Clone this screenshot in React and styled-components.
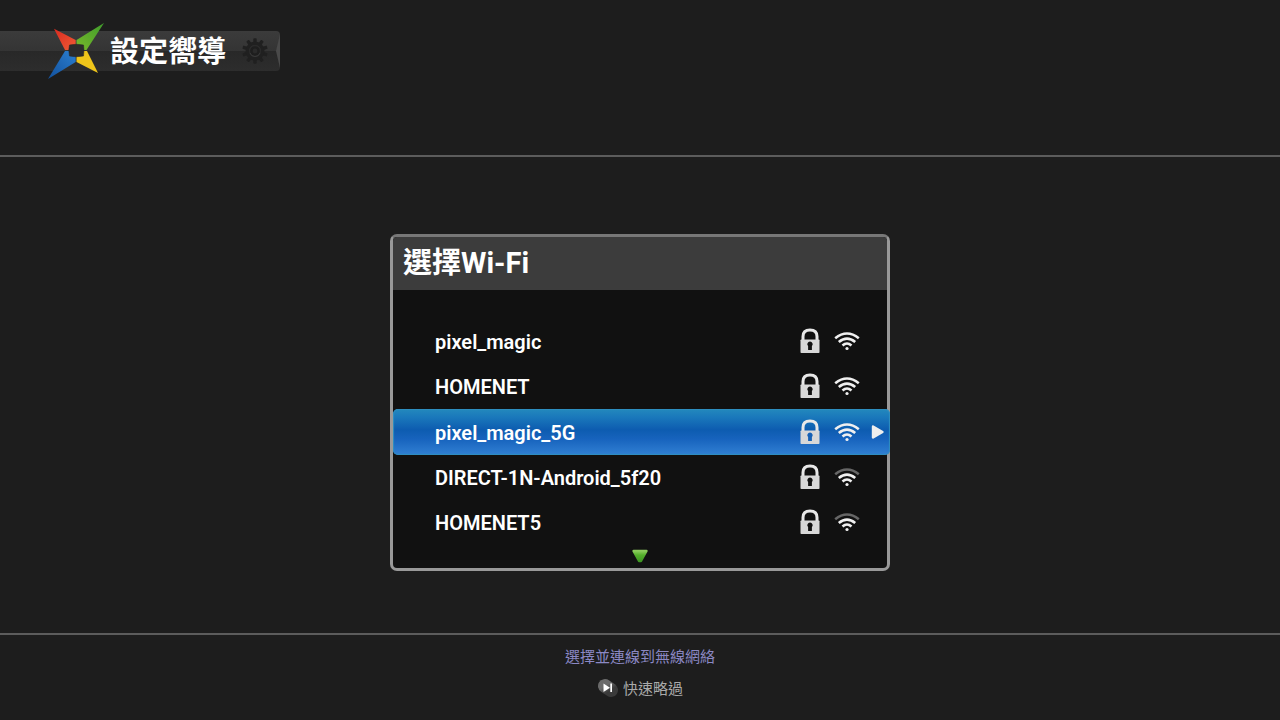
import React, {useState} from 'react'
import styled, {createGlobalStyle} from 'styled-components'

const GlobalStyle = createGlobalStyle`
    * {
        box-sizing: border-box;
    }
    body {
        margin: 0;
        background: #1d1d1d;
        font-family: Roboto, 'Noto Sans CJK TC', sans-serif;
    }
    button {
        font: inherit;
        color: inherit;
        border: 0;
        padding: 0;
        background: none;
        cursor: pointer;
    }
`
const Page = styled.div`
    min-height: 100vh;
    display: flex;
    flex-direction: column;
`
const Header = styled.header`
    height: 157px;
    padding-top: 31px;
    border-bottom: 2px solid #5c5c5c;
`
const TitleBar = styled.div`
    width: 280px;
    height: 40px;
    padding-left: 46px;
    display: flex;
    align-items: center;
    background: linear-gradient(#3b3b3b, #343434 50%, #282828 50%, #2d2d2d);
    border-radius: 0 4px 4px 0;
    svg {
        flex: none;
    }
`
const Title = styled.h1`
    flex: 1;
    margin: 0 0 0 4px;
    padding-top: 2px;
    color: #fff;
    font-size: 29px;
    line-height: 38px;
    font-weight: 700;
    white-space: nowrap;
`
const Main = styled.main`
    flex: 1;
    padding: 14px 20px 0;
    display: flex;
    align-items: center;
    justify-content: center;
`
const Panel = styled.section`
    width: 500px;
    border: 3px solid #999;
    border-top-color: #777;
    border-radius: 7px;
    background: #111;
    color: #fff;
`
const PanelTitle = styled.h2`
    margin: 0;
    padding: 0 10px;
    border-radius: 4px 4px 0 0;
    background: #3c3c3c;
    font-size: 29px;
    line-height: 53px;
    font-weight: 700;
`
const NetworkList = styled.ul`
    margin: 0;
    padding: 29px 0 0;
    list-style: none;
`
const Network = styled.button`
    width: ${props => props.$active ? 'calc(100% + 3px)' : '100%'};
    height: ${props => props.$active ? '46px' : '45px'};
    padding: 0 ${props => props.$active ? '4px' : '27px'} 0 42px;
    display: flex;
    align-items: center;
    border-radius: 5px;
    text-align: left;
    outline: 0;
    background: ${props => props.$active
        ? 'linear-gradient(#2389bd, #1a78bb 18%, #0d5cb0 45%, #1763bd 65%, #3180d3)'
        : 'none'};
    box-shadow: ${props => props.$active ? 'inset 0 0 1px 1px #2f8fc0' : 'none'};
`
const NetworkName = styled.span`
    flex: 1;
    padding-top: 2px;
    font-size: 20px;
    line-height: 24px;
    font-weight: 600;
`
const Icons = styled.span`
    display: flex;
    align-items: center;
    gap: 14px;
`
const LockIcon = styled.svg`
    .keyhole {
        fill: ${props => props.$active ? '#1761b5' : '#111'};
    }
`
const PlayMark = styled.svg`
    margin-left: 10px;
`
const More = styled.button`
    display: block;
    margin: 0 auto;
    height: 23px;
    line-height: 0;
`
const Footer = styled.footer`
    height: 87px;
    padding-top: 10px;
    display: flex;
    flex-direction: column;
    align-items: center;
    gap: 8px;
    border-top: 2px solid #5c5c5c;
    font-size: 15px;
    line-height: 24px;
`
const Hint = styled.p`
    margin: 0;
    color: #8b88c4;
`
const Skip = styled.button`
    display: flex;
    align-items: center;
    gap: 4px;
    color: #aaa;
`

const Logo = () => (
    <svg width="60" height="58" viewBox="0 0 60 58" aria-hidden="true">
        <defs>
            <linearGradient id="green" x1="1" y1="0" x2="0" y2="1">
                <stop offset="0" stopColor="#3f9c2c"/>
                <stop offset="1" stopColor="#78b82a"/>
            </linearGradient>
            <linearGradient id="red" x1="0" y1="0" x2="1" y2="1">
                <stop offset="0" stopColor="#d92b20"/>
                <stop offset="1" stopColor="#f05a35"/>
            </linearGradient>
            <linearGradient id="blue" x1="1" y1="0" x2="0" y2="1">
                <stop offset="0" stopColor="#2b7fd0"/>
                <stop offset="1" stopColor="#12509c"/>
            </linearGradient>
        </defs>
        <path d="M8 6.700 29.700 18V28H19Z" fill="url(#red)"/>
        <path d="M58 1 40.500 28H30.500V18Z" fill="url(#green)"/>
        <path d="M2 57 19 29H29.700V40Z" fill="url(#blue)"/>
        <path d="M52 51 30.500 40V29H41Z" fill="#efc51a"/>
        <path d="M23.500 23Q30 21.500 37.500 23Q38.500 28 37.500 34Q30 35.500 23.500 34Q22 28 23.500 23Z" fill="#2b2b2b" stroke="#222" strokeWidth="0.500"/>
    </svg>
)

const Gear = () => (
    <svg width="26" height="26" viewBox="-13 -13 26 26" aria-hidden="true">
        <g fill="#202020">
            {[0, 36, 72, 108, 144, 180, 216, 252, 288, 324].map(angle => (
                <rect key={angle} x="-1.700" y="-12.800" width="3.400" height="5" rx="0.800" transform={`rotate(${angle})`}/>
            ))}
        </g>
        <circle r="7.700" fill="none" stroke="#202020" strokeWidth="3.600"/>
        <circle r="6" fill="#2a2a2a"/>
        <circle r="3.600" fill="none" stroke="#1e1e1e" strokeWidth="2.400"/>
        <path d="M-5 2A5.300 5.300 0 0 0 5 2" fill="none" stroke="#3d3d3d" strokeWidth="0.800"/>
    </svg>
)

const BarEnd = () => (
    <svg width="12" height="40" viewBox="0 0 12 40" aria-hidden="true">
        <path d="M12 3 8 20 12 37Z" fill="#4a4a4a"/>
    </svg>
)

const Lock = ({active}) => (
    <LockIcon $active={active} width="20" height="26" viewBox="0 0 20 26" aria-hidden="true">
        <path d="M3 12V8.500Q3 2 10 2T17 8.500V12" fill="none" stroke="#e8e8e8" strokeWidth="3"/>
        <rect x="0.500" y="11.500" width="19" height="13.500" rx="0.800" fill="#d8d8d8"/>
        <path className="keyhole" d="M10 13.500a2.700 2.700 0 0 1 1.900 4.600V22H8.100V18.100A2.700 2.700 0 0 1 10 13.500Z"/>
    </LockIcon>
)

const Wifi = ({level}) => (
    <svg width="26" height="20" viewBox="0 0 26 20" fill="none" stroke="#f0f0f0" strokeWidth="2.600" aria-hidden="true">
        <path d="M1.200 7.200Q13 -2.200 24.800 7.200" stroke={level > 3 ? '#f0f0f0' : '#666'}/>
        <path d="M4.800 11Q13 4.200 21.200 11"/>
        <path d="M8.500 14.500Q13 10.500 17.500 14.500"/>
        <circle cx="13" cy="17.500" r="1.600" fill="#f0f0f0" stroke="none"/>
    </svg>
)

const networks = [
    {name: 'pixel_magic', level: 4},
    {name: 'HOMENET', level: 4},
    {name: 'pixel_magic_5G', level: 4},
    {name: 'DIRECT-1N-Android_5f20', level: 3},
    {name: 'HOMENET5', level: 3}
]

const App = () => {
    const [selected, setSelected] = useState('pixel_magic_5G')

    return (
        <Page>
            <GlobalStyle/>
            <Header>
                <TitleBar>
                    <Logo/>
                    <Title>設定嚮導</Title>
                    <Gear/>
                    <BarEnd/>
                </TitleBar>
            </Header>
            <Main>
                <Panel>
                    <PanelTitle>選擇Wi-Fi</PanelTitle>
                    <NetworkList>
                        {networks.map(({name, level}) => (
                            <li key={name}>
                                <Network $active={name === selected} onClick={() => setSelected(name)}>
                                    <NetworkName>{name}</NetworkName>
                                    <Icons>
                                        <Lock active={name === selected}/>
                                        <Wifi level={level}/>
                                    </Icons>
                                    {name === selected &&
                                        <PlayMark width="16" height="16" viewBox="0 0 16 16" aria-hidden="true">
                                            <path d="M3 2.500 12.500 8 3 13.500Z" fill="#eee" stroke="#eee" strokeWidth="2.400" strokeLinejoin="round"/>
                                        </PlayMark>
                                    }
                                </Network>
                            </li>
                        ))}
                    </NetworkList>
                    <More aria-label="更多">
                        <svg width="18" height="15" viewBox="0 0 18 15" aria-hidden="true">
                            <defs>
                                <linearGradient id="more" x1="0" y1="0" x2="0" y2="1">
                                    <stop offset="0" stopColor="#8ccc5c"/>
                                    <stop offset="0.400" stopColor="#55b02c"/>
                                    <stop offset="1" stopColor="#3f9722"/>
                                </linearGradient>
                            </defs>
                            <path d="M2.500 2H15.500L10 12H8Z" fill="url(#more)" stroke="url(#more)" strokeWidth="2.400" strokeLinejoin="round"/>
                        </svg>
                    </More>
                </Panel>
            </Main>
            <Footer>
                <Hint>選擇並連線到無線網絡</Hint>
                <Skip>
                    <svg width="22" height="20" viewBox="0 0 22 20" aria-hidden="true">
                        <defs>
                            <linearGradient id="skip" x1="0" y1="0" x2="1" y2="1">
                                <stop offset="0" stopColor="#6a6a6a"/>
                                <stop offset="1" stopColor="#3a3a3a"/>
                            </linearGradient>
                        </defs>
                        <path d="M8 7 14 11" stroke="url(#skip)" strokeWidth="14" strokeLinecap="round"/>
                        <path d="M6.500 4.500V13L13 8.700Z" fill="#fff"/>
                        <rect x="13.300" y="4.500" width="1.700" height="8.500" fill="#fff"/>
                    </svg>
                    快速略過
                </Skip>
            </Footer>
        </Page>
    )
}

export default App
